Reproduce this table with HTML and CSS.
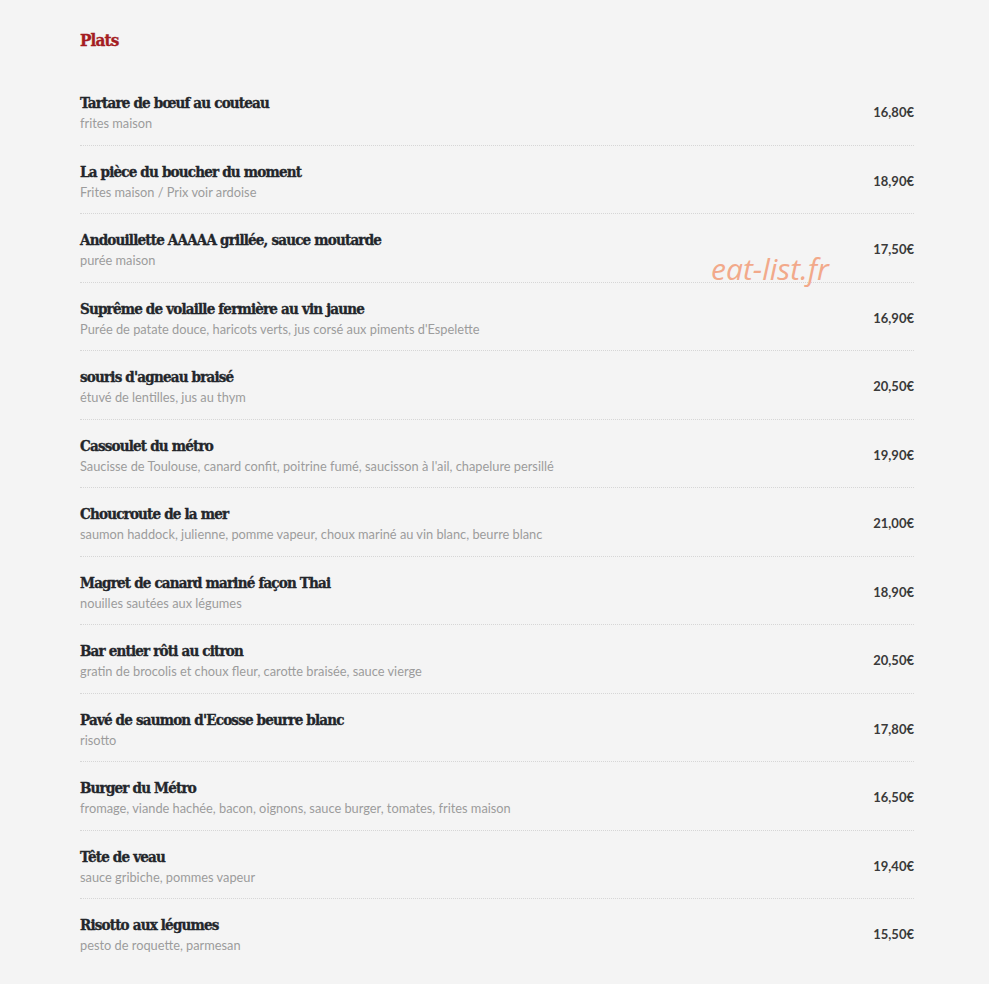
FILE: index.html
```html
<!DOCTYPE html>
<html lang="fr">
<head>
<meta charset="utf-8">
<title>Plats</title>
<link rel="stylesheet" href="styles.css">
</head>
<body>
<div class="page">
  <h2 class="section-title">Plats</h2>
  <ul class="menu">
    <li class="item"><div class="info"><div class="name">Tartare de bœuf au couteau</div><div class="desc">frites maison</div></div><div class="price">16,80€</div></li>
    <li class="item"><div class="info"><div class="name">La pièce du boucher du moment</div><div class="desc">Frites maison / Prix voir ardoise</div></div><div class="price">18,90€</div></li>
    <li class="item"><div class="info"><div class="name">Andouillette AAAAA grillée, sauce moutarde</div><div class="desc">purée maison</div></div><div class="price">17,50€</div></li>
    <li class="item"><div class="info"><div class="name">Suprême de volaille fermière au vin jaune</div><div class="desc">Purée de patate douce, haricots verts, jus corsé aux piments d'Espelette</div></div><div class="price">16,90€</div></li>
    <li class="item"><div class="info"><div class="name">souris d'agneau braisé</div><div class="desc">étuvé de lentilles, jus au thym</div></div><div class="price">20,50€</div></li>
    <li class="item"><div class="info"><div class="name">Cassoulet du métro</div><div class="desc">Saucisse de Toulouse, canard confit, poitrine fumé, saucisson à l'ail, chapelure persillé</div></div><div class="price">19,90€</div></li>
    <li class="item"><div class="info"><div class="name">Choucroute de la mer</div><div class="desc">saumon haddock, julienne, pomme vapeur, choux mariné au vin blanc, beurre blanc</div></div><div class="price">21,00€</div></li>
    <li class="item"><div class="info"><div class="name">Magret de canard mariné façon Thai</div><div class="desc">nouilles sautées aux légumes</div></div><div class="price">18,90€</div></li>
    <li class="item"><div class="info"><div class="name">Bar entier rôti au citron</div><div class="desc">gratin de brocolis et choux fleur, carotte braisée, sauce vierge</div></div><div class="price">20,50€</div></li>
    <li class="item"><div class="info"><div class="name">Pavé de saumon d'Ecosse beurre blanc</div><div class="desc">risotto</div></div><div class="price">17,80€</div></li>
    <li class="item"><div class="info"><div class="name">Burger du Métro</div><div class="desc">fromage, viande hachée, bacon, oignons, sauce burger, tomates, frites maison</div></div><div class="price">16,50€</div></li>
    <li class="item"><div class="info"><div class="name">Tête de veau</div><div class="desc">sauce gribiche, pommes vapeur</div></div><div class="price">19,40€</div></li>
    <li class="item"><div class="info"><div class="name">Risotto aux légumes</div><div class="desc">pesto de roquette, parmesan</div></div><div class="price">15,50€</div></li>
  </ul>
  <div class="watermark">eat-list.fr</div>
</div>
</body>
</html>
```

FILE: styles.css
```css
html, body {
  margin: 0;
  padding: 0;
  background: #f4f4f4;
}

.page {
  position: relative;
  width: 834px;
  padding: 28px 0 0 80px;
}

.section-title {
  margin: 0 0 25px 0;
  font-family: "DejaVu Serif", serif;
  font-stretch: condensed;
  font-weight: bold;
  font-size: 17px;
  line-height: 24px;
  color: #a41c22;
  letter-spacing: -0.9px;
  -webkit-text-stroke: 0.3px #a41c22;
}

.menu {
  list-style: none;
  margin: 0;
  padding: 0;
}

.item {
  display: flex;
  align-items: center;
  justify-content: space-between;
  padding: 14px 0 11.5px 0;
  border-bottom: 1px dotted #d6d6d6;
}

.item:last-child {
  border-bottom: none;
}

.info {
  padding-top: 1px;
}

.name {
  font-family: "DejaVu Serif", serif;
  font-stretch: condensed;
  font-weight: bold;
  font-size: 15px;
  line-height: 22px;
  color: #23262b;
  letter-spacing: -0.8px;
  -webkit-text-stroke: 0.35px #23262b;
}

.desc {
  font-family: Lato, "Liberation Sans", sans-serif;
  font-size: 12.8px;
  line-height: 19px;
  color: #9c9c9c;
}

.price {
  font-family: Lato, "Liberation Sans", sans-serif;
  font-weight: bold;
  font-size: 13px;
  line-height: 18px;
  color: #3a3a3a;
}

.watermark {
  position: absolute;
  left: 711px;
  top: 249px;
  font-family: "Open Sans", sans-serif;
  font-style: italic;
  font-size: 30px;
  line-height: 40px;
  color: #f2a98a;
}
```
